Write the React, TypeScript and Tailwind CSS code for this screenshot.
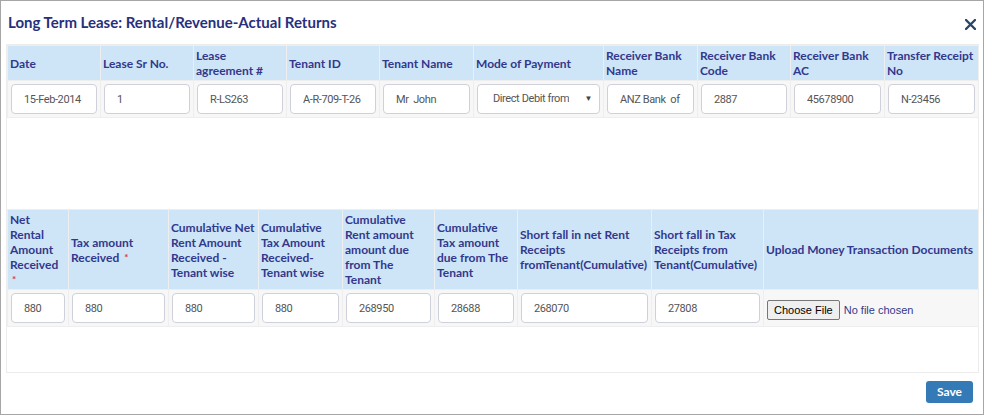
import { ReactNode } from "react";

type Col = { lines: ReactNode[]; width: string };

const Star = () => <span className="ml-[2px] align-top text-[10px] text-[#e3342f]">*</span>;

const topCols: Col[] = [
  { lines: ["Date"], width: "w-[93px]" },
  { lines: ["Lease Sr No."], width: "w-[93px]" },
  { lines: ["Lease", "agreement #"], width: "w-[93px]" },
  { lines: ["Tenant ID"], width: "w-[93px]" },
  { lines: ["Tenant Name"], width: "w-[94px]" },
  { lines: ["Mode of Payment"], width: "w-[130px]" },
  { lines: ["Receiver Bank", "Name"], width: "w-[94px]" },
  { lines: ["Receiver Bank", "Code"], width: "w-[93px]" },
  { lines: ["Receiver Bank", "AC"], width: "w-[94px]" },
  { lines: ["Transfer Receipt", "No"], width: "w-[94px]" },
];

const bottomCols: Col[] = [
  { lines: ["Net", "Rental", "Amount", "Received", <Star key="s" />], width: "w-[61px]" },
  { lines: ["Tax amount", <>Received <Star /></>], width: "w-[100px]" },
  { lines: ["Cumulative Net", "Rent Amount", "Received -", "Tenant wise"], width: "w-[90px]" },
  { lines: ["Cumulative", "Tax Amount", "Received-", "Tenant wise"], width: "w-[84px]" },
  { lines: ["Cumulative", "Rent amount", "amount due", "from The", "Tenant"], width: "w-[92px]" },
  { lines: ["Cumulative", "Tax amount", "due from The", "Tenant"], width: "w-[83px]" },
  { lines: ["Short fall in net Rent", "Receipts", "fromTenant(Cumulative)"], width: "w-[134px]" },
  { lines: ["Short fall in Tax", "Receipts from", "Tenant(Cumulative)"], width: "w-[112px]" },
  { lines: ["Upload Money Transaction Documents"], width: "w-[215px]" },
];

const th =
  "border border-[#eeeeee] bg-[#cde5f7] px-[2px] text-left align-middle font-[Lato,sans-serif] text-[12px] font-bold leading-[15px] text-[#33388c] whitespace-nowrap overflow-hidden";
const td = "border border-[#eeeeee] bg-[#f7f7f7] p-[3px]";
const inputCls =
  "h-[30px] w-full rounded-[4px] border border-[#cfd1da] bg-white px-3 font-[Roboto,sans-serif] text-[11px] tracking-[-0.4px] text-[#555] outline-none";

const Field = ({ value }: { value: string }) => (
  <input className={inputCls} defaultValue={value} readOnly />
);

const Header = ({ cols, height }: { cols: Col[]; height: string }) => (
  <>
    <colgroup>
      {cols.map((c, i) => (
        <col key={i} className={c.width} />
      ))}
    </colgroup>
    <thead>
      <tr className={height}>
        {cols.map((c, i) => (
          <th key={i} className={th}>
            {c.lines.map((l, j) => (
              <div key={j}>{l}</div>
            ))}
          </th>
        ))}
      </tr>
    </thead>
  </>
);

export default function App() {
  const topValues = ["15-Feb-2014", "1", "R-LS263", "A-R-709-T-26", "Mr  John"];
  const bankValues = ["ANZ Bank  of Australia", "2887", "45678900", "N-23456"];
  const bottomValues = ["880", "880", "880", "880", "268950", "28688", "268070", "27808"];

  return (
    <div className="flex h-[415px] w-[984px] flex-col border border-[#a6a6a6] bg-white font-[Lato,sans-serif]">
      <div className="flex h-[43px] items-center justify-between pl-[7px] pr-[7px]">
        <h1 className="text-[15px] font-bold text-[#27307c]">
          Long Term Lease: Rental/Revenue-Actual Returns
        </h1>
        <svg width="11" height="11" viewBox="0 0 11 11" className="mt-[4px]">
          <path d="M1 1L10 10M10 1L1 10" stroke="#2c4766" strokeWidth="2.4" strokeLinecap="round" />
        </svg>
      </div>

      <div className="ml-[5px] mr-[4px] flex h-[329px] flex-col border border-[#ececec]">
        <div className="h-[164px]">
          <table className="w-full table-fixed border-collapse">
            <Header cols={topCols} height="h-[35px]" />
            <tbody>
              <tr>
                {topValues.map((v, i) => (
                  <td key={i} className={td}>
                    <Field value={v} />
                  </td>
                ))}
                <td className={td}>
                  <div className="flex h-[30px] w-full items-center rounded-[4px] border border-[#cfd1da] bg-white pl-[15px] pr-[7px] font-[Roboto,sans-serif] text-[11px] tracking-[-0.4px] text-[#555]">
                    <span className="w-[76px] overflow-hidden whitespace-nowrap">
                      Direct Debit from Customer
                    </span>
                    <span className="ml-auto text-[8px] text-[#444]">▼</span>
                  </div>
                </td>
                {bankValues.map((v, i) => (
                  <td key={i} className={td}>
                    <Field value={v} />
                  </td>
                ))}
              </tr>
            </tbody>
          </table>
        </div>

        <div className="flex-1">
          <table className="w-full table-fixed border-collapse">
            <Header cols={bottomCols} height="h-[80px]" />
            <tbody>
              <tr>
                {bottomValues.map((v, i) => (
                  <td key={i} className={td}>
                    <Field value={v} />
                  </td>
                ))}
                <td className={td}>
                  <input
                    type="file"
                    className="w-full font-[Arial,'Liberation_Sans',sans-serif] text-[11px] text-[#33388c] file:mr-[4px] file:rounded-[2px] file:border file:border-[#767676] file:bg-[#efefef] file:px-[6px] file:py-[1px] file:text-black"
                  />
                </td>
              </tr>
            </tbody>
          </table>
        </div>
      </div>

      <div className="flex flex-1 items-start justify-end pr-[10px] pt-[8px]">
        <button className="h-[22px] w-[47px] rounded-[3px] bg-[#337ab7] text-[12px] font-bold text-white">
          Save
        </button>
      </div>
    </div>
  );
}
